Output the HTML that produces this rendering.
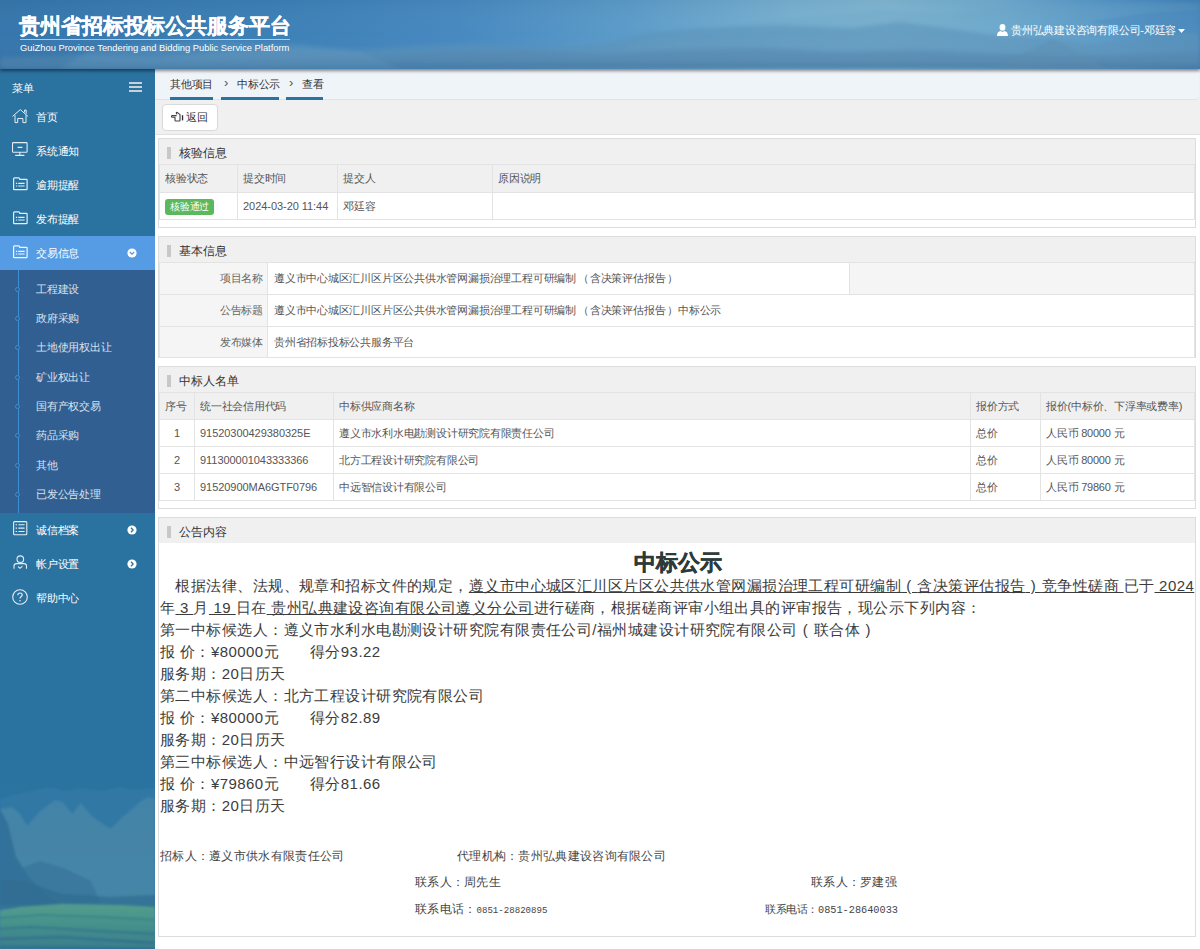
<!DOCTYPE html>
<html><head><meta charset="utf-8">
<style>
*{margin:0;padding:0;box-sizing:border-box}
html,body{width:1200px;height:949px;overflow:hidden;background:#f0f0f0;font-family:"Liberation Sans",sans-serif;color:#333}
.abs{position:absolute}
#hdr{position:absolute;left:0;top:0;width:1200px;height:69px;overflow:hidden;z-index:5;box-shadow:0 2px 3px rgba(0,0,0,.45);
 background:linear-gradient(90deg,#2f6ea3 0%,#3b7db4 15%,#4a8dc2 30%,#5c9dcc 45%,#6aa7cf 58%,#77b0d0 70%,#6aa6cc 82%,#4f92c3 92%,#3b7fb6 100%)}
#side{position:absolute;left:0;top:69px;width:155px;height:880px;background:#2a72a0;overflow:hidden;z-index:2}
#main{position:absolute;left:154px;top:69px;width:1046px;height:880px;background:#f0f0f0}
.panel{position:absolute;left:4px;width:1038px;border:1px solid #ddd;background:#fff}
.ph{height:25px;background:#f0f0f0;font-size:12px;line-height:28px;padding-left:20px;position:relative;color:#333}
.ph:before{content:"";position:absolute;left:8px;top:8px;width:4px;height:12px;background:#c8c8c8}
table{border-collapse:collapse;font-size:11px;color:#333}
td{border:1px solid #e3e3e3;padding:0 5px;white-space:nowrap;letter-spacing:-0.22px;color:#555}
.badge{display:inline-block;background:#5cb85c;color:#fff;font-size:10px;letter-spacing:-0.2px;line-height:16px;height:16px;padding:0 5px;border-radius:3px;vertical-align:middle;position:relative;top:1px}
td.lbl{background:#f5f5f5;text-align:right;color:#666}
.ann{position:absolute;left:1px;top:34px;width:1036px;font-size:15px;letter-spacing:0.44px;white-space:nowrap;line-height:22px;color:#3c3c3c}
.ann .ttl{margin-top:-1px;text-align:center;letter-spacing:0;font-size:22px;font-weight:bold;line-height:24px;color:#2d3a3a;-webkit-text-stroke:0.4px #2d3a3a}
.ann u{text-decoration:underline}
.ft{position:absolute;font-family:"Liberation Serif",serif;font-size:12px;letter-spacing:0.3px;line-height:14px;color:#444;white-space:nowrap}
.ft .m{font-family:"Liberation Mono",monospace;font-size:11px;letter-spacing:-0.4px}
.mi{position:absolute;left:36px;font-size:11px;line-height:14px;color:#fff;white-space:nowrap;letter-spacing:-0.22px}
.si{position:absolute;left:36px;font-size:11px;line-height:14px;color:#d8e2ec;white-space:nowrap;letter-spacing:-0.22px}
.si:before{content:"";position:absolute;left:-21px;top:5px;width:3px;height:3px;border:1px solid #3b8fd3;border-radius:50%;background:#325f92}
.bc{position:absolute;top:8px;font-size:11px;line-height:14px;color:#333;white-space:nowrap;letter-spacing:-0.22px}
.chev{position:absolute;left:-13px;top:-1px;font-size:13px;color:#555}
.t2 td{padding:0 6px}
.t2 td.lbl{padding-right:4px}
.lp{position:relative;left:2px;letter-spacing:3px}
.rp{margin-left:2px}
.alp{letter-spacing:0.98px}
.arp{letter-spacing:0.98px}
</style></head><body>
<div id="hdr">
  <svg class="abs" style="left:0;top:0" width="1200" height="69" viewBox="0 0 1200 69">
    <defs>
      <linearGradient id="hg" x1="0" y1="0" x2="1" y2="0">
        <stop offset="0" stop-color="#3676ac"/>
        <stop offset="0.22" stop-color="#3c80b6"/>
        <stop offset="0.38" stop-color="#4789c0"/>
        <stop offset="0.52" stop-color="#5b9bc9"/>
        <stop offset="0.66" stop-color="#78b0d1"/>
        <stop offset="0.74" stop-color="#80b6d2"/>
        <stop offset="0.84" stop-color="#6eaacf"/>
        <stop offset="0.93" stop-color="#5294c8"/>
        <stop offset="1" stop-color="#3e80b9"/>
      </linearGradient>
      <linearGradient id="vg" x1="0" y1="0" x2="0" y2="1">
        <stop offset="0" stop-color="#000" stop-opacity="0.04"/>
        <stop offset="0.5" stop-color="#fff" stop-opacity="0.0"/>
        <stop offset="1" stop-color="#000" stop-opacity="0.05"/>
      </linearGradient>
      <filter id="bl" x="-5%" y="-50%" width="110%" height="200%"><feGaussianBlur stdDeviation="2"/></filter>
      <filter id="bl2" x="-5%" y="-50%" width="110%" height="200%"><feGaussianBlur stdDeviation="1"/></filter>
    </defs>
    <rect width="1200" height="69" fill="url(#hg)"/>
    <g filter="url(#bl)">
      <path d="M600 69 L640 40 L700 30 L760 20 L820 16 L880 10 L940 14 L1000 8 L1060 4 L1200 2 L1200 69 Z" fill="#6aa3c6" opacity="0.35"/>
      <path d="M0 69 L0 58 L80 55 L160 57 L240 50 L300 48 L360 50 L420 46 L480 44 L540 48 L600 44 L650 32 L700 28 L780 25 L850 28 L900 22 L960 30 L1000 36 L1053 38 L1090 44 L1130 40 L1170 30 L1200 28 L1200 69 Z" fill="#5c93b9" opacity="0.6"/>
      <path d="M0 69 L0 60 L100 58 L200 60 L300 56 L380 57 L440 52 L520 50 L600 54 L680 50 L760 48 L840 52 L920 50 L1000 54 L1100 56 L1200 52 L1200 69 Z" fill="#5689b0" opacity="0.55"/>
      <path d="M0 69 L0 56 L40 54 L80 58 L120 62 L1200 64 L1200 69 Z" fill="#3a76a8" opacity="0.3"/>
      <path d="M60 69 L90 50 L150 44 L220 40 L300 44 L360 52 L400 69 Z" fill="#6a9fc6" opacity="0.3"/>
    </g>
    <g filter="url(#bl2)">
      <path d="M990 69 L1013 58 L1053 39 L1075 50 L1107 68 L1110 69 Z" fill="#5b8fb3" opacity="0.5"/>
      <path d="M1090 22 L1140 14 L1200 10 L1200 34 L1150 30 Z" fill="#3e82bb" opacity="0.3"/>
    </g>
    <rect width="1200" height="69" fill="url(#vg)"/>
  </svg>
  <div class="abs" style="left:19px;top:13px;font-size:21px;font-weight:bold;color:#fff;letter-spacing:-0.1px;line-height:26px;-webkit-text-stroke:0.2px #fff">贵州省招标投标公共服务平台</div>
  <div class="abs" style="left:20px;top:39px;width:270px;height:1px;background:rgba(255,255,255,.6)"></div>
  <div class="abs" style="left:20px;top:42px;font-size:9.35px;color:#fff;line-height:12px;white-space:nowrap">GuiZhou Province Tendering and Bidding Public Service Platform</div>
  <svg class="abs" style="left:997px;top:24px" width="11" height="12" viewBox="0 0 11 12"><ellipse cx="5.5" cy="3.4" rx="2.9" ry="3.3" fill="#fff"/><path d="M0 12 C0 8.6 1.8 7.3 3.6 7 L5.5 8 L7.4 7 C9.2 7.3 11 8.6 11 12 Z" fill="#fff"/></svg>
  <div class="abs" style="left:1011px;top:23px;font-size:11px;color:#fff;line-height:14px;white-space:nowrap;letter-spacing:-0.22px">贵州弘典建设咨询有限公司-邓廷容</div>
  <svg class="abs" style="left:1178px;top:29px" width="7" height="4" viewBox="0 0 7 4"><path d="M0 0 H7 L3.5 4 Z" fill="#fff"/></svg>
</div>
<div id="side">
  <svg class="abs" style="left:0;top:700px" width="155" height="180" viewBox="0 0 154 180" preserveAspectRatio="none">
    <defs>
      <linearGradient id="sg" x1="0" y1="0" x2="0" y2="1">
        <stop offset="0" stop-color="#2a72a0"/>
        <stop offset="1" stop-color="#2f78a5"/>
      </linearGradient>
      <linearGradient id="mg" x1="0" y1="0" x2="0" y2="1">
        <stop offset="0" stop-color="#4484a9"/>
        <stop offset="0.6" stop-color="#4686a7"/>
        <stop offset="1" stop-color="#3c7c9f"/>
      </linearGradient>
      <linearGradient id="fg" x1="0" y1="0" x2="0" y2="1">
        <stop offset="0" stop-color="#56a08c"/>
        <stop offset="0.45" stop-color="#47938a"/>
        <stop offset="1" stop-color="#3a7f8c"/>
      </linearGradient>
      <filter id="sb"><feGaussianBlur stdDeviation="1.3"/></filter>
      <filter id="sb2"><feGaussianBlur stdDeviation="0.8"/></filter>
    </defs>
    <rect width="154" height="180" fill="url(#sg)"/>
    <g filter="url(#sb)">
      <path d="M0 30 L20 24 L35 21 L50 18 L65 22 L80 19 L100 22 L118 18 L135 21 L154 19 L154 180 L0 180 Z" fill="#3a7eaa" opacity="0.5"/>
      <path d="M0 40 L12 38 L20 45 L27 57 L40 42 L55 31 L62 33 L72 45 L80 34 L92 48 L110 60 L122 48 L138 34 L147 28 L154 30 L154 180 L0 180 Z" fill="url(#mg)" opacity="0.95"/>
      <path d="M0 40 L8 55 L16 88 L30 110 L45 125 L60 136 L0 136 Z" fill="#2f6e98" opacity="0.85"/>
      <path d="M20 100 L40 92 L65 100 L90 112 L100 134 L20 134 Z" fill="#33719a" opacity="0.6"/>
      <path d="M0 110 L25 112 L60 125 L110 128 L154 126 L154 140 L0 140 Z" fill="#2f6d92" opacity="0.7"/>
    </g>
    <path d="M0 142 L20 138 L60 135 L120 136 L154 138 L154 180 L0 180 Z" fill="url(#fg)" opacity="0.92" filter="url(#sb2)"/>
    <g filter="url(#sb2)" opacity="0.6">
      <path d="M0 149 L40 146 L100 148 L154 151" stroke="#2f7584" stroke-width="1.6" fill="none"/>
      <path d="M0 160 L30 158 L80 161 L154 165" stroke="#2d6a8c" stroke-width="2.2" fill="none"/>
      <path d="M0 170 L60 168 L154 174" stroke="#2d6590" stroke-width="2.6" fill="none"/>
      <path d="M0 178 L154 180" stroke="#2d6590" stroke-width="3" fill="none"/>
    </g>
  </svg>
  <div class="abs" style="left:12px;top:12px;font-size:11px;color:#fff;line-height:14px">菜单</div>
  <div class="abs" style="left:129px;top:13px;width:13px;height:2px;background:#c8d0da"></div>
  <div class="abs" style="left:129px;top:17px;width:13px;height:2px;background:#c8d0da"></div>
  <div class="abs" style="left:129px;top:21px;width:13px;height:2px;background:#c8d0da"></div>
  <!-- items -->
  <svg class="abs" style="left:12px;top:40px" width="17" height="15" viewBox="0 0 17 15"><path d="M0.5 7.4 L8.3 0.6 L16 7.4 M12.6 3.4 V1 H14.2 V4.8 M3 6.2 V13.6 H5.7 V9.5 H10.9 V13.6 H14 V6.2" fill="none" stroke="#e6edf3" stroke-width="1"/></svg>
  <div class="mi" style="top:41px">首页</div>
  <svg class="abs" style="left:12px;top:73px" width="16" height="15" viewBox="0 0 16 15"><rect x="0.5" y="0.6" width="14.6" height="9.6" rx="0.8" fill="none" stroke="#e6edf3" stroke-width="1.1"/><path d="M5.6 5.4 H10.4 M7.8 10.2 V13 M3.2 13.4 H12.4" stroke="#e6edf3" stroke-width="1.1"/></svg>
  <div class="mi" style="top:75px">系统通知</div>
  <svg class="abs" style="left:13px;top:108px" width="15" height="14" viewBox="0 0 15 14"><path d="M0.6 12 V1.6 C0.6 1.2 0.9 0.9 1.3 0.9 H5.8 C6.3 0.9 6.6 1.3 6.8 2.3 H13.3 C13.8 2.3 14.1 2.6 14.1 3 V12 C14.1 12.4 13.8 12.7 13.3 12.7 H1.3 C0.9 12.7 0.6 12.4 0.6 12 Z" fill="none" stroke="#e6edf3" stroke-width="1.2"/><path d="M2.9 6.3 H4.2 M5.2 6.3 H11.6 M2.9 9 H4.2 M5.2 9 H11.6" stroke="#e6edf3" stroke-width="1.2"/></svg>
  <div class="mi" style="top:109px">逾期提醒</div>
  <svg class="abs" style="left:13px;top:142px" width="15" height="14" viewBox="0 0 15 14"><path d="M0.6 12 V1.6 C0.6 1.2 0.9 0.9 1.3 0.9 H5.8 C6.3 0.9 6.6 1.3 6.8 2.3 H13.3 C13.8 2.3 14.1 2.6 14.1 3 V12 C14.1 12.4 13.8 12.7 13.3 12.7 H1.3 C0.9 12.7 0.6 12.4 0.6 12 Z" fill="none" stroke="#e6edf3" stroke-width="1.2"/><path d="M2.9 6.3 H4.2 M5.2 6.3 H11.6 M2.9 9 H4.2 M5.2 9 H11.6" stroke="#e6edf3" stroke-width="1.2"/></svg>
  <div class="mi" style="top:143px">发布提醒</div>
  <div class="abs" style="left:0;top:167px;width:155px;height:34px;background:#559ce4"></div>
  <svg class="abs" style="left:13px;top:176px" width="15" height="14" viewBox="0 0 15 14"><path d="M0.6 12 V1.6 C0.6 1.2 0.9 0.9 1.3 0.9 H5.8 C6.3 0.9 6.6 1.3 6.8 2.3 H13.3 C13.8 2.3 14.1 2.6 14.1 3 V12 C14.1 12.4 13.8 12.7 13.3 12.7 H1.3 C0.9 12.7 0.6 12.4 0.6 12 Z" fill="none" stroke="#f2f6fa" stroke-width="1.2"/><path d="M2.9 6.3 H4.2 M5.2 6.3 H11.6 M2.9 9 H4.2 M5.2 9 H11.6" stroke="#f2f6fa" stroke-width="1.2"/></svg>
  <div class="mi" style="top:177px">交易信息</div>
  <svg class="abs" style="left:127px;top:179px" width="10" height="10" viewBox="0 0 10 10"><circle cx="5" cy="5" r="4.6" fill="#fff"/><path d="M2.8 4 L5 6.1 L7.2 4" fill="none" stroke="#559ce4" stroke-width="1.3"/></svg>
  <div class="abs" style="left:0;top:201px;width:155px;height:243px;background:#325f92"></div>
  <div class="abs" style="left:17.5px;top:201px;width:1px;height:243px;background:#3b8fd3"></div>
  <div class="si" style="top:213px">工程建设</div>
  <div class="si" style="top:242px">政府采购</div>
  <div class="si" style="top:271px">土地使用权出让</div>
  <div class="si" style="top:301px">矿业权出让</div>
  <div class="si" style="top:330px">国有产权交易</div>
  <div class="si" style="top:359px">药品采购</div>
  <div class="si" style="top:389px">其他</div>
  <div class="si" style="top:418px">已发公告处理</div>
  <svg class="abs" style="left:13px;top:452px" width="15" height="15" viewBox="0 0 15 15"><rect x="0.6" y="0.6" width="13.2" height="13.2" rx="1" fill="none" stroke="#e6edf3" stroke-width="1.1"/><path d="M2.6 3.8 H4 M5.4 3.8 H11.6 M2.6 7.1 H4 M5.4 7.1 H11.6 M2.6 10.5 H4 M5.4 10.5 H11.6" stroke="#e6edf3" stroke-width="1.1"/></svg>
  <div class="mi" style="top:454px">诚信档案</div>
  <svg class="abs" style="left:127px;top:456px" width="10" height="10" viewBox="0 0 10 10"><circle cx="5" cy="5" r="4.6" fill="#fff"/><path d="M4 2.8 L6.1 5 L4 7.2" fill="none" stroke="#2a72a0" stroke-width="1.3"/></svg>
  <svg class="abs" style="left:13px;top:486px" width="15" height="15" viewBox="0 0 15 15"><circle cx="7.3" cy="4.2" r="3.3" fill="none" stroke="#e6edf3" stroke-width="1.1"/><path d="M1 13.8 V11 C1 9.4 2 8.6 3.5 8.6 H11 C12.5 8.6 13.5 9.4 13.5 11 V13.8 M5 11.6 L7.1 13.3 L9.4 11.2" fill="none" stroke="#e6edf3" stroke-width="1.1"/></svg>
  <div class="mi" style="top:488px">帐户设置</div>
  <svg class="abs" style="left:127px;top:490px" width="10" height="10" viewBox="0 0 10 10"><circle cx="5" cy="5" r="4.6" fill="#fff"/><path d="M4 2.8 L6.1 5 L4 7.2" fill="none" stroke="#2a72a0" stroke-width="1.3"/></svg>
  <svg class="abs" style="left:12px;top:520px" width="16" height="16" viewBox="0 0 16 16"><circle cx="8" cy="8" r="7.3" fill="none" stroke="#e8eef4" stroke-width="1.1"/><path d="M5.8 6.2 C5.8 4.8 6.8 4 8 4 C9.3 4 10.2 4.8 10.2 6 C10.2 7.5 8 7.6 8 9.5" fill="none" stroke="#e8eef4" stroke-width="1.2"/><circle cx="8" cy="11.8" r="0.8" fill="#e8eef4"/></svg>
  <div class="mi" style="top:522px">帮助中心</div>
</div>
<div id="main">
  <div class="abs" style="left:0;top:0;width:1045px;height:31px;background:#eff4f9;border-bottom:1px solid #e2e2e2;border-radius:0 0 4px 0"></div>
  <div class="bc" style="left:16px">其他项目</div>
  <div class="abs" style="left:16px;top:28px;width:43px;height:3px;background:#2a72a0"></div>
  <div class="bc" style="left:83px"><span class="chev">›</span>中标公示</div>
  <div class="abs" style="left:67px;top:28px;width:58px;height:3px;background:#2a72a0"></div>
  <div class="bc" style="left:148px"><span class="chev">›</span>查看</div>
  <div class="abs" style="left:132px;top:28px;width:37px;height:3px;background:#2a72a0"></div>
  <div class="abs" style="left:8px;top:35px;width:56px;height:27px;background:#fff;border:1px solid #d9d9d9;border-radius:4px"></div>
  <svg class="abs" style="left:14px;top:39px" width="20" height="18" viewBox="0 0 20 18"><path d="M8.6 7.6 H4.2 C3.3 7.6 3.3 9.2 4.2 9.2 H7 V12.2 C7 12.7 7.4 13 7.8 13 H11.4 C11.8 13 12 12.7 12 12.3 V6.6 L9.2 4.4 C8.7 4 8.1 4.5 8.4 5.2 L8.9 6.4" fill="none" stroke="#444" stroke-width="1.15" stroke-linejoin="round"/><rect x="13.9" y="7.2" width="1.3" height="5.2" fill="#2a2a40"/></svg>
  <div class="abs" style="left:32px;top:41px;font-size:11px;line-height:14px;color:#333">返回</div>
  <div class="abs" style="left:0;top:65px;width:1046px;height:1px;background:#e0e0e0"></div>
  <div class="abs" style="left:0;top:66px;width:1046px;height:814px;background:#fff"></div>

  <div class="panel" style="top:69px;height:90px">
    <div class="ph">核验信息</div>
    <table style="width:1036px;table-layout:fixed">
      <colgroup><col style="width:78px"><col style="width:100px"><col style="width:155px"><col></colgroup>
      <tr style="height:28px;background:#f0f0f0"><td>核验状态</td><td>提交时间</td><td>提交人</td><td>原因说明</td></tr>
      <tr style="height:27px"><td><span class="badge">核验通过</span></td><td style="letter-spacing:-0.05px">2024-03-20 11:44</td><td>邓廷容</td><td></td></tr>
    </table>
  </div>
  <div class="panel" style="top:167px;height:122px">
    <div class="ph">基本信息</div>
    <table class="t2" style="width:1036px;table-layout:fixed">
      <colgroup><col style="width:108px"><col style="width:582px"><col></colgroup>
      <tr style="height:32px"><td class="lbl">项目名称</td><td>遵义市中心城区汇川区片区公共供水管网漏损治理工程可研编制<span class="lp">（</span>含决策评估报告<span class="rp">）</span></td><td style="background:#f5f5f5"></td></tr>
      <tr style="height:32px"><td class="lbl">公告标题</td><td colspan="2">遵义市中心城区汇川区片区公共供水管网漏损治理工程可研编制<span class="lp">（</span>含决策评估报告<span class="rp">）</span>中标公示</td></tr>
      <tr style="height:31px"><td class="lbl">发布媒体</td><td colspan="2">贵州省招标投标公共服务平台</td></tr>
    </table>
  </div>
  <div class="panel" style="top:297px;height:143px">
    <div class="ph">中标人名单</div>
    <table style="width:1036px;table-layout:fixed">
      <colgroup><col style="width:35px"><col style="width:139px"><col style="width:637px"><col style="width:70px"><col></colgroup>
      <tr style="height:27px;background:#f0f0f0"><td>序号</td><td>统一社会信用代码</td><td>中标供应商名称</td><td>报价方式</td><td>报价(中标价、下浮率或费率)</td></tr>
      <tr style="height:27px"><td style="text-align:center">1</td><td style="letter-spacing:-0.05px">91520300429380325E</td><td>遵义市水利水电勘测设计研究院有限责任公司</td><td>总价</td><td>人民币 80000 元</td></tr>
      <tr style="height:27px"><td style="text-align:center">2</td><td style="letter-spacing:-0.05px">911300001043333366</td><td>北方工程设计研究院有限公司</td><td>总价</td><td>人民币 80000 元</td></tr>
      <tr style="height:27px"><td style="text-align:center">3</td><td style="letter-spacing:-0.05px">91520900MA6GTF0796</td><td>中远智信设计有限公司</td><td>总价</td><td>人民币 79860 元</td></tr>
    </table>
  </div>
  <div class="panel" style="top:448px;height:420px">
    <div class="ph">公告内容</div>
    <div class="ann">
      <div class="ttl">中标公示</div>
      <p>　根据法律、法规、规章和招标文件的规定，<u>遵义市中心城区汇川区片区公共供水管网漏损治理工程可研编制<span class="alp"> ( </span>含决策评估报告<span class="arp"> ) </span>竞争性磋商 </u>已于<u> 2024</u><br>年<u> 3 </u>月<u> 19 </u>日在<u> 贵州弘典建设咨询有限公司遵义分公司</u>进行磋商，根据磋商评审小组出具的评审报告，现公示下列内容：</p>
      <p>第一中标候选人：遵义市水利水电勘测设计研究院有限责任公司/福州城建设计研究院有限公司<span class="alp"> ( </span>联合体<span class="arp"> ) </span></p>
      <p>报 价：¥80000元　　得分93.22</p>
      <p>服务期：20日历天</p>
      <p>第二中标候选人：北方工程设计研究院有限公司</p>
      <p>报 价：¥80000元　　得分82.89</p>
      <p>服务期：20日历天</p>
      <p>第三中标候选人：中远智行设计有限公司</p>
      <p>报 价：¥79860元　　得分81.66</p>
      <p>服务期：20日历天</p>
    </div>
    <div class="ft" style="left:1px;top:331px">招标人：遵义市供水有限责任公司</div>
    <div class="ft" style="left:298px;top:331px">代理机构：贵州弘典建设咨询有限公司</div>
    <div class="ft" style="left:256px;top:357px">联系人：周先生</div>
    <div class="ft" style="left:652px;top:357px">联系人：罗建强</div>
    <div class="ft" style="left:256px;top:384px">联系电话：<span class="m" style="font-size:9.1px;letter-spacing:0">0851-28820895</span></div>
    <div class="ft" style="left:606px;top:384px;font-size:11px;letter-spacing:-0.4px">联系电话：<span class="m" style="font-size:10.25px;letter-spacing:0">0851-28640033</span></div>
  </div>
</div>
</body></html>
